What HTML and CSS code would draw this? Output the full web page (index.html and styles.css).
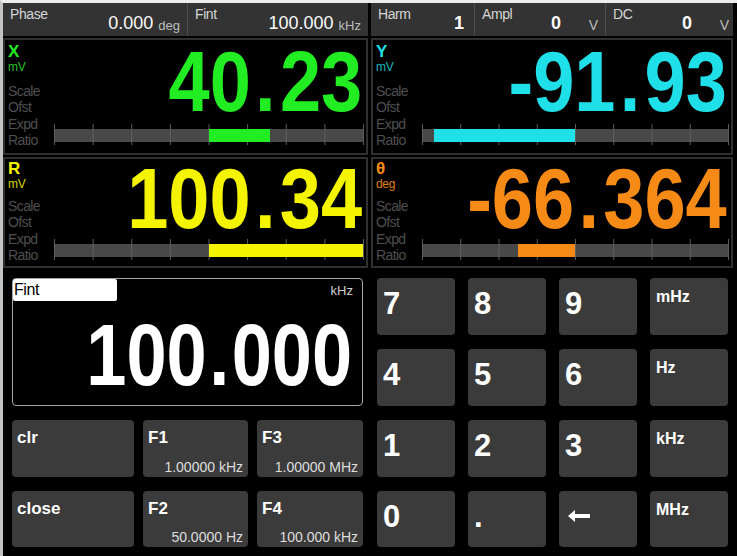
FILE: index.html
```html
<!DOCTYPE html>
<html>
<head>
<meta charset="utf-8">
<link rel="stylesheet" href="styles.css">
</head>
<body>
<div class="screen">
  <div class="topbar">
    <div class="cell c-phase"><span class="lbl">Phase</span><span class="val">0.000</span><span class="unit">deg</span></div>
    <div class="cell c-fint"><span class="lbl">Fint</span><span class="val">100.000</span><span class="unit">kHz</span></div>
    <div class="cell c-harm"><span class="lbl">Harm</span><span class="val bold">1</span></div>
    <div class="cell c-ampl"><span class="lbl">Ampl</span><span class="val bold">0</span><span class="unit wide">V</span></div>
    <div class="cell c-dc"><span class="lbl">DC</span><span class="val bold">0</span><span class="unit wide">V</span></div>
  </div>

  <div class="panels">
    <div class="panel p-x row1">
      <div class="labels">
        <div class="top"><div class="name">X</div><div class="u">mV</div></div>
        <div class="low"><div>Scale</div><div>Ofst</div><div>Expd</div><div>Ratio</div></div>
      </div>
      <div class="main">
        <div class="num"><span class="sx">40<span class="dot">.</span>23</span></div>
        <div class="track"><div class="bar"><div class="fill" style="left:50%;width:20%"></div></div></div>
      </div>
    </div>
    <div class="panel p-y row1">
      <div class="labels">
        <div class="top"><div class="name">Y</div><div class="u">mV</div></div>
        <div class="low"><div>Scale</div><div>Ofst</div><div>Expd</div><div>Ratio</div></div>
      </div>
      <div class="main">
        <div class="num"><span class="sx">-91<span class="dot">.</span>93</span></div>
        <div class="track"><div class="bar"><div class="fill" style="left:4%;width:46%"></div></div></div>
      </div>
    </div>
    <div class="panel p-r row2">
      <div class="labels">
        <div class="top"><div class="name">R</div><div class="u">mV</div></div>
        <div class="low"><div>Scale</div><div>Ofst</div><div>Expd</div><div>Ratio</div></div>
      </div>
      <div class="main">
        <div class="num"><span class="sx">100<span class="dot">.</span>34</span></div>
        <div class="track"><div class="bar"><div class="fill" style="left:50%;width:50%"></div></div></div>
      </div>
    </div>
    <div class="panel p-t row2">
      <div class="labels">
        <div class="top"><div class="name">θ</div><div class="u">deg</div></div>
        <div class="low"><div>Scale</div><div>Ofst</div><div>Expd</div><div>Ratio</div></div>
      </div>
      <div class="main">
        <div class="num"><span class="sx">-66<span class="dot">.</span>364</span></div>
        <div class="track"><div class="bar"><div class="fill" style="left:31.5%;width:18.5%"></div></div></div>
      </div>
    </div>
  </div>

  <div class="bottom">
    <div class="left">
      <div class="entry">
        <div class="entry-head"><span class="entry-lbl">Fint</span><span class="entry-unit">kHz</span></div>
        <div class="entry-num"><span class="sx2">100<span class="edot">.</span>000</span></div>
      </div>
      <div class="btn"><span class="btn-t">clr</span></div>
      <div class="btn"><span class="btn-t">F1</span><span class="btn-v">1.00000 kHz</span></div>
      <div class="btn"><span class="btn-t">F3</span><span class="btn-v">1.00000 MHz</span></div>
      <div class="btn"><span class="btn-t">close</span></div>
      <div class="btn"><span class="btn-t">F2</span><span class="btn-v">50.0000 Hz</span></div>
      <div class="btn"><span class="btn-t">F4</span><span class="btn-v">100.000 kHz</span></div>
    </div>
    <div class="keypad">
      <div class="key">7</div><div class="key">8</div><div class="key">9</div><div class="key unit-key">mHz</div>
      <div class="key">4</div><div class="key">5</div><div class="key">6</div><div class="key unit-key">Hz</div>
      <div class="key">1</div><div class="key">2</div><div class="key">3</div><div class="key unit-key">kHz</div>
      <div class="key">0</div><div class="key">.</div>
      <div class="key"><svg class="arrow" width="22" height="12" viewBox="0 0 22 12"><path d="M0 6 L7 0 L7 4 L22 4 L22 8 L7 8 L7 12 Z" fill="#fff"/></svg></div>
      <div class="key unit-key">MHz</div>
    </div>
  </div>
</div>
</body>
</html>
```
FILE: styles.css
```css
* { box-sizing: border-box; margin: 0; padding: 0; }
html, body { background: #000; }
body {
  width: 737px; height: 556px; overflow: hidden;
  font-family: "Liberation Sans", Arial, sans-serif; color: #fff;
}
.screen {
  width: 737px; height: 556px;
  border-top: 3px solid #ececec;
  border-left: 3px solid #c4c4c4;
  display: flex; flex-direction: column;
  background: #000;
}

/* top bar */
.topbar { height: 33px; display: flex; flex: none; }
.cell {
  display: flex; align-items: flex-end;
  background: #333;
  padding: 4px 7px 4px 7px;
  border-right: 1px solid #4e4e4e;
}
.c-phase { width: 185px; }
.c-fint { width: 180px; margin-right: 3px; border-right: none; }
.c-harm { width: 104px; padding-right: 10px; }
.c-ampl { width: 131px; }
.c-dc { width: 127px; border-right: none; padding-right: 4px; }
.lbl { align-self: flex-start; margin-right: auto; font-size: 14px; line-height: 1; color: #d6d6d6; letter-spacing: -0.4px; }
.val { font-size: 18px; line-height: 1; color: #fafafa; }
.val.bold { font-weight: bold; font-size: 18px; }
.unit { font-size: 13px; line-height: 1; color: #bdbdbd; margin-left: 5px; }
.unit.wide { min-width: 32px; text-align: right; font-size: 14px; }

/* panels */
.panels {
  display: grid;
  grid-template-columns: 365px 362px;
  grid-template-rows: 117px 111px;
  column-gap: 3px; row-gap: 2px;
  margin-top: 2px; flex: none;
}
.panel {
  border: 2px solid #303030;
  background: #000;
  display: grid;
  grid-template-columns: 46px 1fr;
  padding: 2px 2px 0 3px;
}
.row2 { padding-top: 0; }
.labels { display: flex; flex-direction: column; justify-content: space-between; padding-bottom: 4px; }
.row2 .labels { padding-bottom: 2px; }
.name { font-size: 17px; font-weight: bold; line-height: 19px; }
.u { font-size: 12px; line-height: 13px; letter-spacing: -0.3px; }
.low { color: #4f4f4f; font-size: 14px; line-height: 16.6px; letter-spacing: -0.6px; }
.main { display: flex; flex-direction: column; align-items: stretch; }
.num {
  font-weight: bold; font-size: 86px; line-height: 72px;
  text-align: right; padding-right: 2px; white-space: nowrap;
  margin-top: 3px;
}
.row2 .num { margin-top: 3px; }
.sx { display: inline-block; transform: scaleX(0.86); transform-origin: right center; }
.sx2 { display: inline-block; transform: scaleX(0.82); transform-origin: right center; }
.dot { margin: 0 5px; }
.track {
  margin-top: auto; margin-bottom: 8px;
  height: 21px; position: relative;
  background-image: linear-gradient(to right, #5c5c5c 1px, transparent 1px);
  background-size: 12.5% 100%;
  border-right: 1px solid #5c5c5c;
}
.row2 .track { margin-bottom: 6px; }
.bar {
  position: absolute; left: 0; right: 0; top: 5px; height: 13px;
  background-color: #484848;
  background-image: linear-gradient(to right, #5e5e5e 1px, transparent 1px);
  background-size: 12.5% 100%;
}
.fill { position: absolute; top: 0; bottom: 0; }

.p-x .name, .p-x .num { color: #22ec22; }
.p-x .u { color: #2cc02c; }
.p-x .fill { background: #22ec22; }
.p-y .name, .p-y .num { color: #1fe0e8; }
.p-y .u { color: #1ab8c0; }
.p-y .fill { background: #1fe0e8; }
.p-r .name, .p-r .num { color: #f4f400; }
.p-r .u { color: #d6d600; }
.p-r .fill { background: #f4f400; }
.p-t .name, .p-t .num { color: #f68a16; }
.p-t .u { color: #e2801c; }
.p-t .fill { background: #f68a16; }

/* bottom */
.bottom {
  display: grid; grid-template-columns: 368px 366px;
  margin-top: 2px; flex: none;
}
.left {
  display: grid;
  grid-template-columns: 122px 105px 106px;
  grid-template-rows: 57px 57px 57px 56px;
  column-gap: 9px; row-gap: 14px;
  padding: 8px 0 0 9px;
}
.entry {
  grid-column: 1 / 4; grid-row: 1 / 3;
  border: 1px solid #a6a6a6; border-radius: 4px;
  background: #000;
  display: flex; flex-direction: column;
}
.entry-head { display: flex; justify-content: space-between; align-items: flex-start; height: 22px; }
.entry-lbl {
  width: 104px; height: 22px; background: #fff; color: #000;
  font-size: 16px; line-height: 22px; padding-left: 1px;
  border-radius: 2px; letter-spacing: -0.4px;
}
.entry-unit { font-size: 13px; color: #cfcfcf; padding: 5px 9px 0 0; line-height: 1; }
.entry-num {
  font-weight: bold; font-size: 88px; line-height: 1;
  text-align: right; padding-right: 10px; margin-top: 10px;
  white-space: nowrap;
}
.edot { margin: 0 3px; }
.btn {
  background: #3b3b3b; border-radius: 4px;
  display: flex; flex-direction: column; justify-content: space-between;
  padding: 9px 5px 3px 5px;
}
.btn-t { font-size: 17px; font-weight: bold; line-height: 1; }
.btn-v { font-size: 14px; line-height: 1; color: #dedede; text-align: right; }

.keypad {
  display: grid;
  grid-template-columns: repeat(4, 78px);
  grid-template-rows: 57px 57px 57px 56px;
  column-gap: 13px; row-gap: 14px;
  padding: 8px 0 0 6px;
}
.key {
  background: #3b3b3b; border-radius: 4px;
  font-size: 31px; font-weight: bold; line-height: 1;
  padding: 10px 0 0 6px;
}
.unit-key { font-size: 16px; padding: 11px 0 0 6px; }
.arrow { display: block; margin: 9px 0 0 3px; }
```
